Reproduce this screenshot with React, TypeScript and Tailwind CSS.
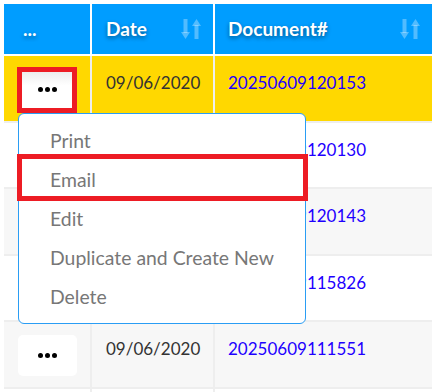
import React from "react";

const rows = [
  { date: "09/06/2020", doc: "20250609120153" },
  { date: "09/06/2020", doc: "20250609120130" },
  { date: "09/06/2020", doc: "20250609120143" },
  { date: "09/06/2020", doc: "20250609115826" },
  { date: "09/06/2020", doc: "20250609111551" },
  { date: "", doc: "" },
];

function SortIcon() {
  return (
    <svg width="20" height="20" viewBox="0 0 20 20" className="shrink-0">
      <g fill="#ffffff" fillOpacity="0.32">
        <rect x="2.5" y="0" width="4" height="14" />
        <polygon points="0,13 9,13 4.5,20" />
        <polygon points="11,7 20,7 15.5,0" />
        <rect x="13.5" y="6" width="4" height="14" />
      </g>
    </svg>
  );
}

function Dots() {
  return (
    <div className="flex items-center gap-[2px]">
      <span className="block w-[5px] h-[5px] rounded-full bg-black" />
      <span className="block w-[5px] h-[5px] rounded-full bg-black" />
      <span className="block w-[5px] h-[5px] rounded-full bg-black" />
    </div>
  );
}

const menuItems = ["Print", "Email", "Edit", "Duplicate and Create New", "Delete"];

export default function App() {
  return (
    <div className="w-[434px] h-[392px] bg-white overflow-hidden font-['Lato',sans-serif]">
      <div className="pt-[4px] pl-[4px]">
        <div className="w-[428px]">
          {/* header */}
          <div className="grid grid-cols-[86px_121px_217px] gap-x-[2px] h-[50px]">
            <div className="bg-[#009dff] flex items-center pl-[19px] text-white font-bold text-[19px] [text-shadow:0_2px_4px_rgba(0,0,0,0.45)]">
              ...
            </div>
            <div className="bg-[#009dff] flex items-center justify-between pl-[14px] pr-[12px] text-white font-bold text-[19px] [text-shadow:0_2px_4px_rgba(0,0,0,0.45)]">
              <span>Date</span>
              <SortIcon />
            </div>
            <div className="bg-[#009dff] flex items-center justify-between pl-[13px] pr-[12px] text-white font-bold text-[19px] [text-shadow:0_2px_4px_rgba(0,0,0,0.45)]">
              <span>Document#</span>
              <SortIcon />
            </div>
          </div>
          {/* body */}
          <div className="mt-[2px] flex flex-col gap-[2px] bg-[#eeeeee]">
            {rows.map((r, i) => {
              const bg = i === 0 ? "bg-[#ffd800]" : i % 2 === 1 ? "bg-white" : "bg-[#f7f7f7]";
              const hasContent = r.doc !== "";
              return (
                <div key={i} className="grid grid-cols-[86px_121px_217px] gap-x-[2px] h-[64.5px]">
                  <div className={`${bg} relative pt-[13px] pl-[14px]`}>
                    {hasContent && (
                      <div className="relative w-[59px] h-[41px]">
                        <div
                          className={
                            i === 0
                              ? "w-[59px] h-[41px] rounded-[5px] bg-gradient-to-b from-[#e9e9e9] to-white to-[40%] flex items-center justify-center"
                              : "w-[59px] h-[41px] rounded-[5px] bg-white flex items-center justify-center"
                          }
                        >
                          <Dots />
                        </div>
                        {i === 0 && (
                          <div className="absolute left-[-1px] top-[-2px] w-[60px] h-[46px] border-[5px] border-[#ed1c24]" />
                        )}
                      </div>
                    )}
                    {i === 0 && (
                      <div className="absolute z-10 left-[14px] top-[57px] w-[288px] h-[211px] rounded-[6px] border border-[#2a9df4] bg-white py-[7px] text-[19.4px] text-[#777777]">
                        {menuItems.map((m) => (
                          <div key={m} className="relative h-[39px] flex items-center pl-[31px]">
                            {m}
                            {m === "Email" && (
                              <div className="absolute left-[-2px] top-[-6px] w-[291px] h-[47px] border-[5px] border-[#ed1c24]" />
                            )}
                          </div>
                        ))}
                      </div>
                    )}
                  </div>
                  <div className={`${bg} pt-[13px] pl-[14px] text-[17px] leading-[27px] text-[#333333]`}>{r.date}</div>
                  <div className={`${bg} pt-[13px] pl-[13px] text-[17px] leading-[27px] text-[#1e00ff]`}>{r.doc}</div>
                </div>
              );
            })}
          </div>
        </div>
      </div>
    </div>
  );
}
